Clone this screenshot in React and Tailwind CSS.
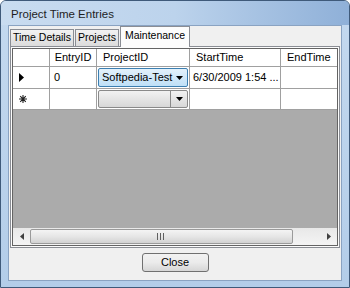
export default function App() {
  const font = { fontFamily: '"Liberation Sans", Arial, sans-serif' };
  return (
    <div
      className="w-[350px] h-[288px] overflow-hidden rounded-t-[6px] border border-[#3f5a7a] bg-gradient-to-b from-[#c4d9ef] to-[#b3cde9] flex flex-col text-[11px] text-black"
      style={font}
    >
      {/* title bar */}
      <div className="h-[24px] flex items-center pl-[10px] pt-[3px] bg-gradient-to-r from-[#c9dcf0] via-[#bcd3ec] to-[#8fb0d8] text-[11.5px] text-[#1e1e1e]">
        Project Time Entries
      </div>

      {/* client */}
      <div className="mx-[7px] h-[256px] bg-[#f0f0f0] border border-[#8aa3c2] flex flex-col">
        {/* tabs */}
        <div className="h-[20px] flex items-end pl-[1px] relative z-10">
          <div className="h-[17px] px-[2px] mr-[1px] border border-b-0 border-[#8a8d94] bg-gradient-to-b from-[#f2f2f2] to-[#dcdcdc] flex items-center text-[10.5px]">
            Time Details
          </div>
          <div className="h-[17px] px-[2px] mr-[1px] border border-b-0 border-[#8a8d94] bg-gradient-to-b from-[#f2f2f2] to-[#dcdcdc] flex items-center text-[10.5px]">
            Projects
          </div>
          <div className="h-[21px] px-[4px] -mb-[1px] border border-b-0 border-[#8a8d94] bg-[#fcfcfc] flex items-center pb-[3px] text-[10.5px]">
            Maintenance
          </div>
        </div>

        {/* tab page */}
        <div className="mx-[1px] h-[202px] border border-[#8a8d94] bg-[#fcfcfc] p-[1px]">
          <div className="h-[198px] border border-[#646464] bg-[#ababab] flex flex-col">
            {/* header */}
            <div className="grid grid-cols-[37px_47px_93px_91px_1fr] h-[18px] bg-white border-b border-[#a0a0a0]">
              <div className="border-r border-[#a0a0a0]" />
              <div className="border-r border-[#a0a0a0] flex items-center justify-center">EntryID</div>
              <div className="border-r border-[#a0a0a0] flex items-center pl-[6px]">ProjectID</div>
              <div className="border-r border-[#a0a0a0] flex items-center pl-[6px]">StartTime</div>
              <div className="flex items-center pl-[6px] whitespace-nowrap">EndTime</div>
            </div>
            {/* row 1 */}
            <div className="grid grid-cols-[37px_47px_93px_91px_1fr] h-[22px] bg-white border-b border-[#a0a0a0]">
              <div className="border-r border-[#a0a0a0] flex items-center pl-[6px]">
                <svg width="5" height="9" viewBox="0 0 5 9">
                  <path d="M0 0 L5 4.5 L0 9 Z" fill="#000" />
                </svg>
              </div>
              <div className="border-r border-[#a0a0a0] flex items-center pl-[4px]">0</div>
              <div className="border-r border-[#a0a0a0] p-[1px]">
                <div className="h-full rounded-[2px] border border-[#3c7fb1] bg-gradient-to-b from-[#e3f1fb] to-[#bfe0f7] flex items-center justify-between pl-[3px] pr-[4px]">
                  <span>Softpedia-Test</span>
                  <svg width="7" height="4" viewBox="0 0 7 4">
                    <path d="M0 0 L7 0 L3.5 4 Z" fill="#000" />
                  </svg>
                </div>
              </div>
              <div className="border-r border-[#a0a0a0] flex items-center pl-[3px] whitespace-nowrap overflow-hidden">
                6/30/2009 1:54 ...
              </div>
              <div />
            </div>
            {/* row 2 */}
            <div className="grid grid-cols-[37px_47px_93px_91px_1fr] h-[21px] bg-white border-b border-[#a0a0a0]">
              <div className="border-r border-[#a0a0a0] flex items-center pl-[6px]">
                <svg width="8" height="8" viewBox="0 0 8 8">
                  <path
                    d="M4 0 V8 M0 4 H8 M1.2 1.2 L6.8 6.8 M6.8 1.2 L1.2 6.8"
                    stroke="#222"
                    strokeWidth="1.1"
                  />
                </svg>
              </div>
              <div className="border-r border-[#a0a0a0]" />
              <div className="border-r border-[#a0a0a0] p-[1px]">
                <div className="h-full rounded-[2px] border border-[#8a8a8a] bg-gradient-to-b from-[#f2f2f2] to-[#d8d8d8] flex justify-end">
                  <div className="w-[17px] border-l border-[#8a8a8a] flex items-center justify-center">
                    <svg width="7" height="4" viewBox="0 0 7 4">
                      <path d="M0 0 L7 0 L3.5 4 Z" fill="#000" />
                    </svg>
                  </div>
                </div>
              </div>
              <div className="border-r border-[#a0a0a0]" />
              <div />
            </div>

            <div className="flex-1" />

            {/* horizontal scrollbar */}
            <div className="h-[17px] bg-gradient-to-b from-[#e8e8e8] to-[#f4f4f4] flex items-center">
              <div className="w-[17px] h-full flex items-center justify-center">
                <svg width="4" height="7" viewBox="0 0 4 7">
                  <path d="M4 0 L0 3.5 L4 7 Z" fill="#404040" />
                </svg>
              </div>
              <div className="w-[263px] h-[15px] rounded-[2px] border border-[#9a9a9a] bg-gradient-to-b from-[#f4f4f4] via-[#e6e6e6] to-[#d2d2d2] flex items-center justify-end pr-[128px]">
                <svg width="7" height="7" viewBox="0 0 7 7">
                  <path d="M0.5 0 V7 M3.5 0 V7 M6.5 0 V7" stroke="#606060" strokeWidth="1" />
                </svg>
              </div>
              <div className="flex-1" />
              <div className="w-[17px] h-full flex items-center justify-center">
                <svg width="4" height="7" viewBox="0 0 4 7">
                  <path d="M0 0 L4 3.5 L0 7 Z" fill="#404040" />
                </svg>
              </div>
            </div>
          </div>
        </div>

        {/* footer */}
        <div className="flex-1 flex justify-center pt-[5px]">
          <button
            type="button"
            className="w-[67px] h-[19px] rounded-[3px] border border-[#707070] bg-gradient-to-b from-[#f2f2f2] via-[#ebebeb] to-[#d6d6d6] text-[11px] flex items-center justify-center"
            style={font}
          >
            Close
          </button>
        </div>
      </div>
    </div>
  );
}
